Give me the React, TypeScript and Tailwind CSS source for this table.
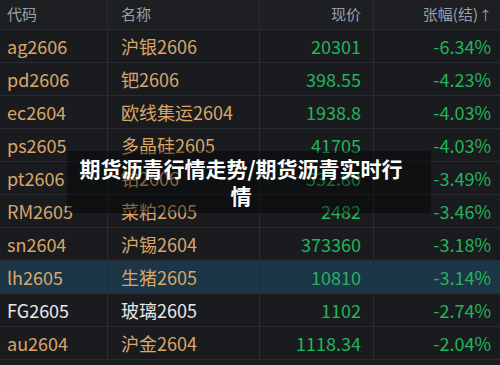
const rows = [
  { code: "ag2606", name: "沪银2606", price: "20301", chg: "-6.34%" },
  { code: "pd2606", name: "钯2606", price: "398.55", chg: "-4.23%" },
  { code: "ec2604", name: "欧线集运2604", price: "1938.8", chg: "-4.03%" },
  { code: "ps2605", name: "多晶硅2605", price: "41705", chg: "-4.03%" },
  { code: "pt2606", name: "铂2606", price: "532.80", chg: "-3.49%" },
  { code: "RM2605", name: "菜粕2605", price: "2482", chg: "-3.46%" },
  { code: "sn2604", name: "沪锡2604", price: "373360", chg: "-3.18%" },
  { code: "lh2605", name: "生猪2605", price: "10810", chg: "-3.14%", active: true },
  { code: "FG2605", name: "玻璃2605", price: "1102", chg: "-2.74%", white: true },
  { code: "au2604", name: "沪金2604", price: "1118.34", chg: "-2.04%" },
];

const font = { fontFamily: '"Noto Sans CJK SC", "Noto Sans", sans-serif' };

const App = () => {
  return (
    <div className="relative h-[365px] w-[500px] overflow-hidden bg-[#1a1b1f]" style={font}>
      <div className="grid h-[30px] grid-cols-[108px_152px_114px_126px] border-b border-[#2a2b30] bg-[#1e1f23] text-[15px] text-[#98a0ab]">
        <div className="flex items-center border-r border-[#2a2b30] pl-[7px]">代码</div>
        <div className="flex items-center border-r border-[#2a2b30] pl-[13px]">名称</div>
        <div className="flex items-center justify-end border-r border-[#2a2b30] pr-[12px]">现价</div>
        <div className="flex items-center justify-end pr-[8px]">
          张幅(结)<span className="ml-[1px] text-[13px]">↑</span>
        </div>
      </div>
      {rows.map((r) => (
        <div
          key={r.code}
          className={`grid h-[33px] grid-cols-[108px_152px_114px_126px] border-b border-[#2a2b30] text-[18px] ${
            r.active ? "bg-[#1c3547]" : ""
          }`}
        >
          <div
            className={`flex items-center border-r border-[#2a2b30] pl-[7px] ${
              r.white ? "text-[#e8e8e8]" : "text-[#d9a668]"
            }`}
          >
            {r.code}
          </div>
          <div
            className={`flex items-center border-r border-[#2a2b30] pl-[13px] ${
              r.white ? "text-[#e8e8e8]" : "text-[#d9a668]"
            }`}
          >
            {r.name}
          </div>
          <div className="flex items-center justify-end border-r border-[#2a2b30] pr-[12px] text-[#22b45a]">
            {r.price}
          </div>
          <div className="flex items-center justify-end pr-[9px] text-[#22b45a]">{r.chg}</div>
        </div>
      ))}
      <div className="absolute left-[67px] top-[151px] flex h-[62px] w-[364px] flex-col items-center justify-center bg-black/40 pr-[16px] text-[21px] font-bold leading-[27px] text-white">
        <span>期货沥青行情走势/期货沥青实时行</span>
        <span>情</span>
      </div>
    </div>
  );
};

export default App;
